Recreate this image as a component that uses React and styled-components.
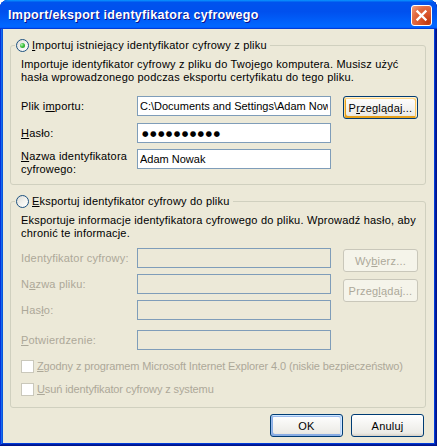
import React from "react";
import styled, { createGlobalStyle, css } from "styled-components";

const Global = createGlobalStyle`
  html, body { margin: 0; padding: 0; background: #ffffff; }
  #root { width: 437px; height: 446px; }
`;

const FONT = `"Liberation Sans", Arial, sans-serif`;

const Window = styled.div`
  width: 437px;
  height: 446px;
  box-sizing: border-box;
  display: flex;
  flex-direction: column;
  background: #0855dd;
  border-radius: 8px 8px 0 0;
  box-shadow: inset -1px -1px #00138c, inset 1px 1px #0831d9,
    inset -2px -2px #001ea0, inset 2px 2px #166aee, inset -3px -3px #003bda,
    inset 3px 3px #0855dd;
  padding: 0 3px 3px 3px;
  font-family: ${FONT};
  font-size: 11px;
  letter-spacing: 0.2px;
  color: #000;
`;

const TitleBar = styled.div`
  height: 29px;
  margin: 0 -3px;
  box-sizing: border-box;
  display: flex;
  align-items: center;
  justify-content: space-between;
  padding: 0 5px 0 8px;
  border-radius: 8px 8px 0 0;
  background: linear-gradient(
    180deg,
    #0997ff,
    #0053ee 8%,
    #0050ee 40%,
    #0066ff 88%,
    #0066ff 93%,
    #005bff 95%,
    #003dd7 96%,
    #003dd7
  );
`;

const Title = styled.div`
  color: #fff;
  font-family: ${FONT};
  font-weight: bold;
  font-size: 12.5px;
  letter-spacing: 0.3px;
  text-shadow: 1px 1px #0f1089;
  padding-top: 1px;
`;

const CloseButton = styled.button`
  width: 21px;
  height: 21px;
  padding: 0;
  margin-top: 2px;
  box-sizing: border-box;
  border: 1px solid #fff;
  border-radius: 3px;
  background: radial-gradient(
    circle at 85% 85%,
    #c1390f 0%,
    #d9542a 35%,
    #e16a41 65%,
    #f3a283 100%
  );
  display: flex;
  align-items: center;
  justify-content: center;
`;

const Body = styled.div`
  flex: 1;
  background: #ece9d8;
  display: flex;
  flex-direction: column;
  padding: 0 8px 0 7px;
`;

const Group = styled.fieldset`
  margin: ${(p) => p.$mt}px 0 0 0;
  padding: 0;
  border: 1px solid #d0d0bf;
  border-radius: 3px;
  min-width: 0;
`;

const Legend = styled.legend`
  margin-left: 4px;
  padding: 0 3px 0 1px;
  display: flex;
  align-items: center;
  gap: 3px;
  height: 13px;
  line-height: 13px;
`;

const Radio = styled.span`
  width: 13px;
  height: 13px;
  box-sizing: border-box;
  border-radius: 50%;
  border: 1px solid #1c5180;
  background: linear-gradient(135deg, #dcdcd7 0%, #f3f3ef 55%, #ffffff 100%);
  display: inline-flex;
  align-items: center;
  justify-content: center;
`;

const RadioDot = styled.span`
  width: 5px;
  height: 5px;
  border-radius: 50%;
  background: radial-gradient(
    circle at 35% 35%,
    #b8f5b8 0%,
    #3fc23f 45%,
    #1f8f1f 100%
  );
`;

const GroupInner = styled.div`
  padding: 6px 6px ${(p) => p.$pb}px 10px;
  display: flex;
  flex-direction: column;
`;

const Desc = styled.p`
  margin: 0;
  line-height: 13px;
  white-space: nowrap;
`;

const FieldRow = styled.div`
  margin-top: ${(p) => p.$mt || 0}px;
  height: ${(p) => p.$h}px;
  display: grid;
  grid-template-columns: 116px 206px 75px;
  align-items: start;
`;

const Label = styled.label`
  line-height: ${(p) => (p.$multi ? "13px" : "20px")};
  margin-top: ${(p) => (p.$multi ? 1 : 0)}px;
  color: ${(p) => (p.$disabled ? "#aca899" : "#000")};
  white-space: ${(p) => (p.$multi ? "normal" : "nowrap")};
`;

const Input = styled.input`
  box-sizing: border-box;
  width: 194px;
  height: 20px;
  margin: 0;
  border: 1px solid #7f9db9;
  padding: 0 2px;
  font-family: ${FONT};
  font-size: 11px;
  letter-spacing: 0;
  color: #000;
  background: ${(p) => (p.disabled ? "#ece9d8" : "#fff")};
  outline: none;
  ${(p) =>
    p.$dots &&
    css`
      font-family: "DejaVu Sans", sans-serif;
      font-size: 7.5px;
      letter-spacing: 1.4px;
      padding-left: 4px;
    `}
`;

const Button = styled.button`
  box-sizing: border-box;
  width: ${(p) => p.$w || 75}px;
  height: 23px;
  margin: ${(p) => p.$mt || 0}px 0 0 0;
  padding: 0;
  font-family: ${FONT};
  font-size: 11px;
  letter-spacing: 0.2px;
  color: #000;
  border: 1px solid #003c74;
  border-radius: 3px;
  background: linear-gradient(180deg, #fff, #ecebe6 86%, #d6d0c5);
  ${(p) =>
    p.$hot &&
    css`
      box-shadow: inset -1px 1px #fff0cf, inset 1px 2px #fdd889,
        inset -2px 2px #fbc761, inset 2px -2px #e5a01a;
    `}
  ${(p) =>
    p.$default &&
    css`
      box-shadow: inset -1px 1px #cee7ff, inset 1px 2px #98b8ea,
        inset -2px 2px #bcd4f6, inset 1px -1px #89ade4,
        inset 2px -2px #89ade4;
    `}
  &:disabled {
    border-color: #c9c7ba;
    background: #f5f4ea;
    color: #aca899;
    box-shadow: none;
  }
`;

const CheckRow = styled.label`
  margin-top: ${(p) => p.$mt}px;
  display: flex;
  align-items: center;
  gap: 3px;
  height: 13px;
  line-height: 13px;
  color: #aca899;
  letter-spacing: -0.12px;
  white-space: nowrap;
`;

const CheckBox = styled.span`
  width: 13px;
  height: 13px;
  box-sizing: border-box;
  border: 1px solid #cac8bb;
  background: #fff;
  flex: none;
`;

const Footer = styled.div`
  margin-top: 6px;
  display: flex;
  justify-content: flex-end;
  gap: 8px;
  padding-right: 2px;
`;

const Key = styled.span`
  text-decoration: underline;
  text-underline-offset: 1px;
`;

export default function App() {
  return (
    <>
      <Global />
      <Window>
        <TitleBar>
          <Title>Import/eksport identyfikatora cyfrowego</Title>
          <CloseButton aria-label="Zamknij">
            <svg width="13" height="13" viewBox="0 0 13 13">
              <path
                d="M2.5 2.5 L10.5 10.5 M10.5 2.5 L2.5 10.5"
                stroke="#fff"
                strokeWidth="2.4"
                strokeLinecap="square"
              />
            </svg>
          </CloseButton>
        </TitleBar>
        <Body>
          <Group $mt={10}>
            <Legend>
              <Radio>
                <RadioDot />
              </Radio>
              <span>
                <Key>I</Key>mportuj istniejący identyfikator cyfrowy z pliku
              </span>
            </Legend>
            <GroupInner $pb={8}>
              <Desc>
                Importuje identyfikator cyfrowy z pliku do Twojego komputera.
                Musisz użyć
                <br />
                hasła wprowadzonego podczas eksportu certyfikatu do tego pliku.
              </Desc>
              <FieldRow $mt={12} $h={27}>
                <Label>
                  Plik i<Key>m</Key>portu:
                </Label>
                <Input
                  readOnly
                  value="C:\Documents and Settings\Adam Nowak"
                />
                <Button $hot>
                  P<Key>r</Key>zeglądaj...
                </Button>
              </FieldRow>
              <FieldRow $h={26}>
                <Label>
                  <Key>H</Key>asło:
                </Label>
                <Input readOnly $dots value="●●●●●●●●●●" />
              </FieldRow>
              <FieldRow $h={27}>
                <Label $multi>
                  <Key>N</Key>azwa identyfikatora
                  <br />
                  cyfrowego:
                </Label>
                <Input readOnly value="Adam Nowak" />
              </FieldRow>
            </GroupInner>
          </Group>

          <Group $mt={10}>
            <Legend>
              <Radio />
              <span>
                <Key>E</Key>ksportuj identyfikator cyfrowy do pliku
              </span>
            </Legend>
            <GroupInner $pb={11}>
              <Desc>
                Eksportuje informacje identyfikatora cyfrowego do pliku.
                Wprowadź hasło, aby
                <br />
                chronić te informacje.
              </Desc>
              <FieldRow $mt={8} $h={26}>
                <Label $disabled>Identyfikator cyfrowy:</Label>
                <Input disabled />
                <Button disabled $mt={1}>
                  Wy<Key>b</Key>ierz...
                </Button>
              </FieldRow>
              <FieldRow $h={26}>
                <Label $disabled>
                  N<Key>a</Key>zwa pliku:
                </Label>
                <Input disabled />
                <Button disabled $mt={5}>
                  Przeg<Key>l</Key>ądaj...
                </Button>
              </FieldRow>
              <FieldRow $h={30}>
                <Label $disabled>
                  Has<Key>ł</Key>o:
                </Label>
                <Input disabled />
              </FieldRow>
              <FieldRow $h={20}>
                <Label $disabled>
                  <Key>P</Key>otwierdzenie:
                </Label>
                <Input disabled />
              </FieldRow>
              <CheckRow $mt={10}>
                <CheckBox />
                <span>
                  <Key>Z</Key>godny z programem Microsoft Internet Explorer 4.0
                  (niskie bezpieczeństwo)
                </span>
              </CheckRow>
              <CheckRow $mt={10}>
                <CheckBox />
                <span>
                  <Key>U</Key>suń identyfikator cyfrowy z systemu
                </span>
              </CheckRow>
            </GroupInner>
          </Group>

          <Footer>
            <Button $w={73} $default>
              OK
            </Button>
            <Button $w={73}>Anuluj</Button>
          </Footer>
        </Body>
      </Window>
    </>
  );
}
